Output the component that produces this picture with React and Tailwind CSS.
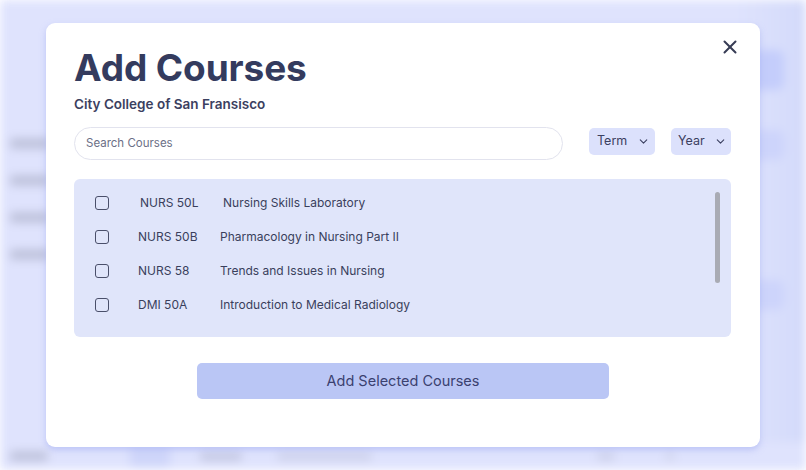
import React, { useState } from 'react';
import { X, ChevronDown } from 'lucide-react';

const courses = [
  { code: 'NURS 50L', title: 'Nursing Skills Laboratory', nudge: true },
  { code: 'NURS 50B', title: 'Pharmacology in Nursing Part II' },
  { code: 'NURS 58', title: 'Trends and Issues in Nursing' },
  { code: 'DMI 50A', title: 'Introduction to Medical Radiology' },
];

// blurred app page sitting behind the modal
function Backdrop() {
  return (
    <div className="absolute inset-0 flex flex-col bg-[#dfe3fd] blur-[5px]">
      <div className="flex flex-1">
        <div className="flex w-[60px] flex-col gap-[26px] pl-[10px] pt-[138px]">
          {[0, 1, 2, 3].map((i) => (
            <div key={i} className="h-[11px] w-[42px] rounded bg-[#bfc3dc]" />
          ))}
        </div>
        <div className="flex-1" />
        <div className="flex w-[70px] flex-col gap-[40px] bg-gradient-to-l from-[#d3dafa] to-transparent pl-[8px] pt-[50px]">
          <div className="h-[40px] w-[40px] rounded-lg bg-[#c4cdfb]" />
          <div className="h-[30px] w-[40px] rounded-lg bg-[#cdd4fb]" />
          <div className="mt-[80px] h-[30px] w-[40px] rounded-lg bg-[#cdd4fb]" />
        </div>
      </div>
      <div className="flex h-[28px] items-center pl-[10px]">
        <div className="h-[10px] w-[38px] rounded bg-[#bfc3dc]" />
        <div className="ml-[82px] h-[22px] w-[40px] rounded bg-[#cfd6fa]" />
        <div className="ml-[30px] h-[9px] w-[42px] rounded bg-[#c5c9e3]" />
        <div className="ml-[35px] h-[9px] w-[95px] rounded bg-[#cfd3ec]" />
        <div className="ml-[225px] h-[9px] w-[18px] rounded bg-[#cfd3ec]" />
        <div className="ml-[50px] h-[9px] w-[10px] rounded bg-[#d3d7ef]" />
      </div>
    </div>
  );
}

export default function App() {
  const [checked, setChecked] = useState({});
  return (
    <div
      className="relative flex h-[470px] w-[806px] items-center justify-center overflow-hidden"
      style={{ fontFamily: 'Inter, "Noto Sans", sans-serif' }}
    >
      <Backdrop />
      <div className="relative flex h-[424px] w-[714px] flex-col rounded-[9px] bg-white px-[28px] pt-[23px] shadow-[0_3px_6px_rgba(160,172,240,0.55)]">
        <button className="absolute right-[19px] top-[13px] text-[#373c55]">
          <X size={22} strokeWidth={2.2} />
        </button>
        <h1 className="text-[37px] font-bold leading-[44px] tracking-[-0.1px] text-[#343b5e]">Add Courses</h1>
        <p className="mt-[5px] text-[13.5px] font-semibold leading-[18px] text-[#3b4060]">City College of San Fransisco</p>

        <div className="mt-[14px] flex items-center">
          <div className="flex h-[33px] w-[489px] items-center rounded-full border border-[#e2e3ee] pl-[11px] text-[11.5px] text-[#6b6f86]">
            Search Courses
          </div>
          <button className="ml-[26px] mb-[5px] flex h-[27px] w-[66px] items-center gap-[10px] rounded-[5px] bg-[#dce1fc] pl-[8px] text-[12.5px] text-[#3b4060]">
            Term <ChevronDown size={13} strokeWidth={2} />
          </button>
          <button className="ml-[16px] mb-[5px] flex h-[27px] w-[60px] items-center gap-[9px] rounded-[5px] bg-[#dce1fc] pl-[7px] text-[12.5px] text-[#3b4060]">
            Year <ChevronDown size={13} strokeWidth={2} />
          </button>
        </div>

        <div className="relative mt-[19px] h-[158px] w-[657px] rounded-[6px] bg-[#e0e5fa] pt-[7px]">
          {courses.map((c, i) => (
            <label key={i} className="flex h-[34px] items-center text-[12px] text-[#3a3f5c]">
              <span
                onClick={() => setChecked({ ...checked, [i]: !checked[i] })}
                className="ml-[21px] h-[14px] w-[14px] rounded-[3px] border-[1.5px] border-[#4a4f6a] bg-transparent"
              />
              <span className={c.nudge ? 'ml-[31px] w-[82px]' : 'ml-[29px] w-[82px]'}>{c.code}</span>
              <span className={c.nudge ? 'ml-[1px]' : ''}>{c.title}</span>
            </label>
          ))}
          <div className="absolute right-[11px] top-[13px] h-[91px] w-[5px] rounded-full bg-[#a9abb4]" />
        </div>

        <button className="mx-auto mt-[26px] h-[36px] w-[412px] rounded-[5px] bg-[#bac6f5] text-[14.5px] text-[#3b4170]">
          Add Selected Courses
        </button>
      </div>
    </div>
  );
}
